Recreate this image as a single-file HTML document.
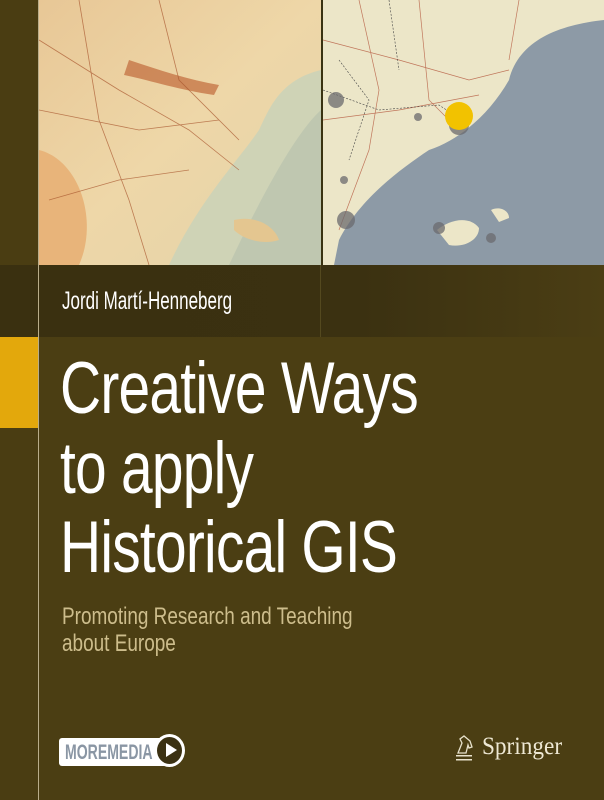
<!DOCTYPE html>
<html><head><style>
html,body{margin:0;padding:0}
body{width:604px;height:800px;position:relative;overflow:hidden;background:#4b3e13;font-family:"Liberation Sans",sans-serif}
.abs{position:absolute}
.t{color:#fff;font-size:73px;left:60px;white-space:nowrap;letter-spacing:-1px;line-height:1;transform:scaleX(.78);transform-origin:0 0}
.s{color:#cdbd8c;font-size:24px;left:62px;white-space:nowrap;line-height:1;transform:scaleX(.79);transform-origin:0 0}
</style></head><body>
<div class="abs" style="left:0;top:0;width:38px;height:800px;background:#4a3d12"></div>
<div class="abs" style="left:38px;top:0;width:1px;height:800px;background:#b9ad8a"></div>
<svg class="abs" style="left:39px;top:0" width="565" height="265" viewBox="0 0 565 265">
<defs><linearGradient id="lm" x1="0" y1="0" x2="1" y2="1"><stop offset="0" stop-color="#e8c796"/><stop offset=".5" stop-color="#eed7a8"/><stop offset="1" stop-color="#e3d2a8"/></linearGradient></defs>
<rect width="282" height="265" fill="url(#lm)"/>
<path d="M0,150 C40,160 60,220 40,265 L0,265Z" fill="#e8b47a"/>
<path d="M90,60 C120,70 150,80 180,85 L175,95 C140,90 110,80 85,75Z" fill="#c06a3a" opacity=".7"/>
<path d="M282,70 C240,80 230,110 220,130 C200,160 160,200 130,265 L282,265Z" fill="#cfd3b6"/>
<path d="M282,110 C260,130 230,180 190,265 L282,265Z" fill="#bfc7b0"/>
<path d="M195,220 C215,215 235,225 240,240 C225,245 205,240 195,230Z" fill="#e4c690"/>
<g stroke="#a8552e" stroke-width=".8" fill="none" opacity=".7">
<path d="M0,40 L80,90 L150,130 L200,170 M40,0 L60,120 L90,200 L110,265 M0,110 L100,130 L180,120 M120,0 L140,80 L200,140 M10,200 L80,180 L150,170"/></g>
<rect x="282" width="2" height="265" fill="#3a3311"/>
<rect x="284" width="281" height="265" fill="#ece6c8"/>
<path d="M565,20 C520,25 480,40 470,80 C450,115 420,140 390,150 C360,170 320,200 300,240 L295,265 L565,265Z" fill="#8d9aa6"/>
<path d="M398,230 C410,220 430,215 440,228 C440,240 425,248 410,245Z" fill="#ece6c8"/>
<path d="M452,210 C460,206 470,210 470,218 L460,222Z" fill="#ece6c8"/>
<g stroke="#b55a40" stroke-width=".7" fill="none" opacity=".8">
<path d="M284,40 L360,60 L430,80 L470,70 M320,0 L340,90 L330,150 L300,230 M380,0 L390,100 L420,130 M284,120 L360,110 L440,95 M480,0 L470,60"/></g>
<g stroke="#444" stroke-width=".6" stroke-dasharray="2 1.5" fill="none">
<path d="M284,90 L340,110 L400,105 L430,125 M350,0 L360,70 M300,60 L330,100 L310,160"/></g>
<g fill="#6b6a6e" opacity=".75"><circle cx="297" cy="100" r="8"/><circle cx="420" cy="125" r="10"/><circle cx="379" cy="117" r="4"/><circle cx="307" cy="220" r="9"/><circle cx="400" cy="228" r="6"/><circle cx="452" cy="238" r="5"/><circle cx="305" cy="180" r="4"/></g>
<circle cx="420" cy="116" r="14" fill="#f2c200"/>
</svg>
<div class="abs" style="left:0;top:265px;width:604px;height:72px;background:linear-gradient(90deg,#3a3010,#3b3111 60%,#4b3e14)"></div>
<div class="abs" style="left:38px;top:265px;width:1px;height:72px;background:#b9ad8a"></div>
<div class="abs" style="left:320px;top:265px;width:1px;height:72px;background:#54491f"></div>
<div class="abs" style="left:0;top:337px;width:38px;height:91px;background:#e3a80c"></div>
<div class="abs" style="left:62px;top:287px;color:#fff;font-size:25px;white-space:nowrap;transform:scaleX(.68);transform-origin:0 0">Jordi Martí-Henneberg</div>
<div class="abs t" style="top:352px">Creative Ways</div>
<div class="abs t" style="top:432px">to apply</div>
<div class="abs t" style="top:511px">Historical GIS</div>
<div class="abs s" style="top:605px">Promoting Research and Teaching</div>
<div class="abs s" style="top:632px">about Europe</div>
<div class="abs" style="left:59px;top:738px;width:112px;height:28px;background:#fff;border-radius:3px"></div>
<div class="abs" style="left:65px;top:740px;color:#8a96a4;font-size:21px;line-height:25px;font-weight:bold;white-space:nowrap;transform:scaleX(.67);transform-origin:0 0">MOREMEDIA</div>
<div class="abs" style="left:154px;top:734px;width:31px;height:33px;border-radius:50%;background:#fff"></div>
<div class="abs" style="left:157px;top:737px;width:25px;height:27px;border-radius:50%;background:#3b3112"></div>
<div class="abs" style="left:166px;top:743px;width:0;height:0;border-left:11px solid #fff;border-top:7.5px solid transparent;border-bottom:7.5px solid transparent"></div>
<svg class="abs" style="left:453px;top:733px" width="22" height="30" viewBox="0 0 22 30"><path d="M5,20 L9,10 L7,6 L11,3 L17,8 L19,14 L16,15 L15,12 L13,20 Z" fill="none" stroke="#e8e2cc" stroke-width="1.3"/><rect x="3" y="22" width="16" height="1.5" fill="#e8e2cc"/><rect x="3" y="26" width="16" height="1.5" fill="#e8e2cc"/></svg>
<div class="abs" style="left:482px;top:733px;color:#eee8d4;font-family:'Liberation Serif',serif;font-size:25px;white-space:nowrap;transform:scaleX(.93);transform-origin:0 0">Springer</div>
</body></html>
